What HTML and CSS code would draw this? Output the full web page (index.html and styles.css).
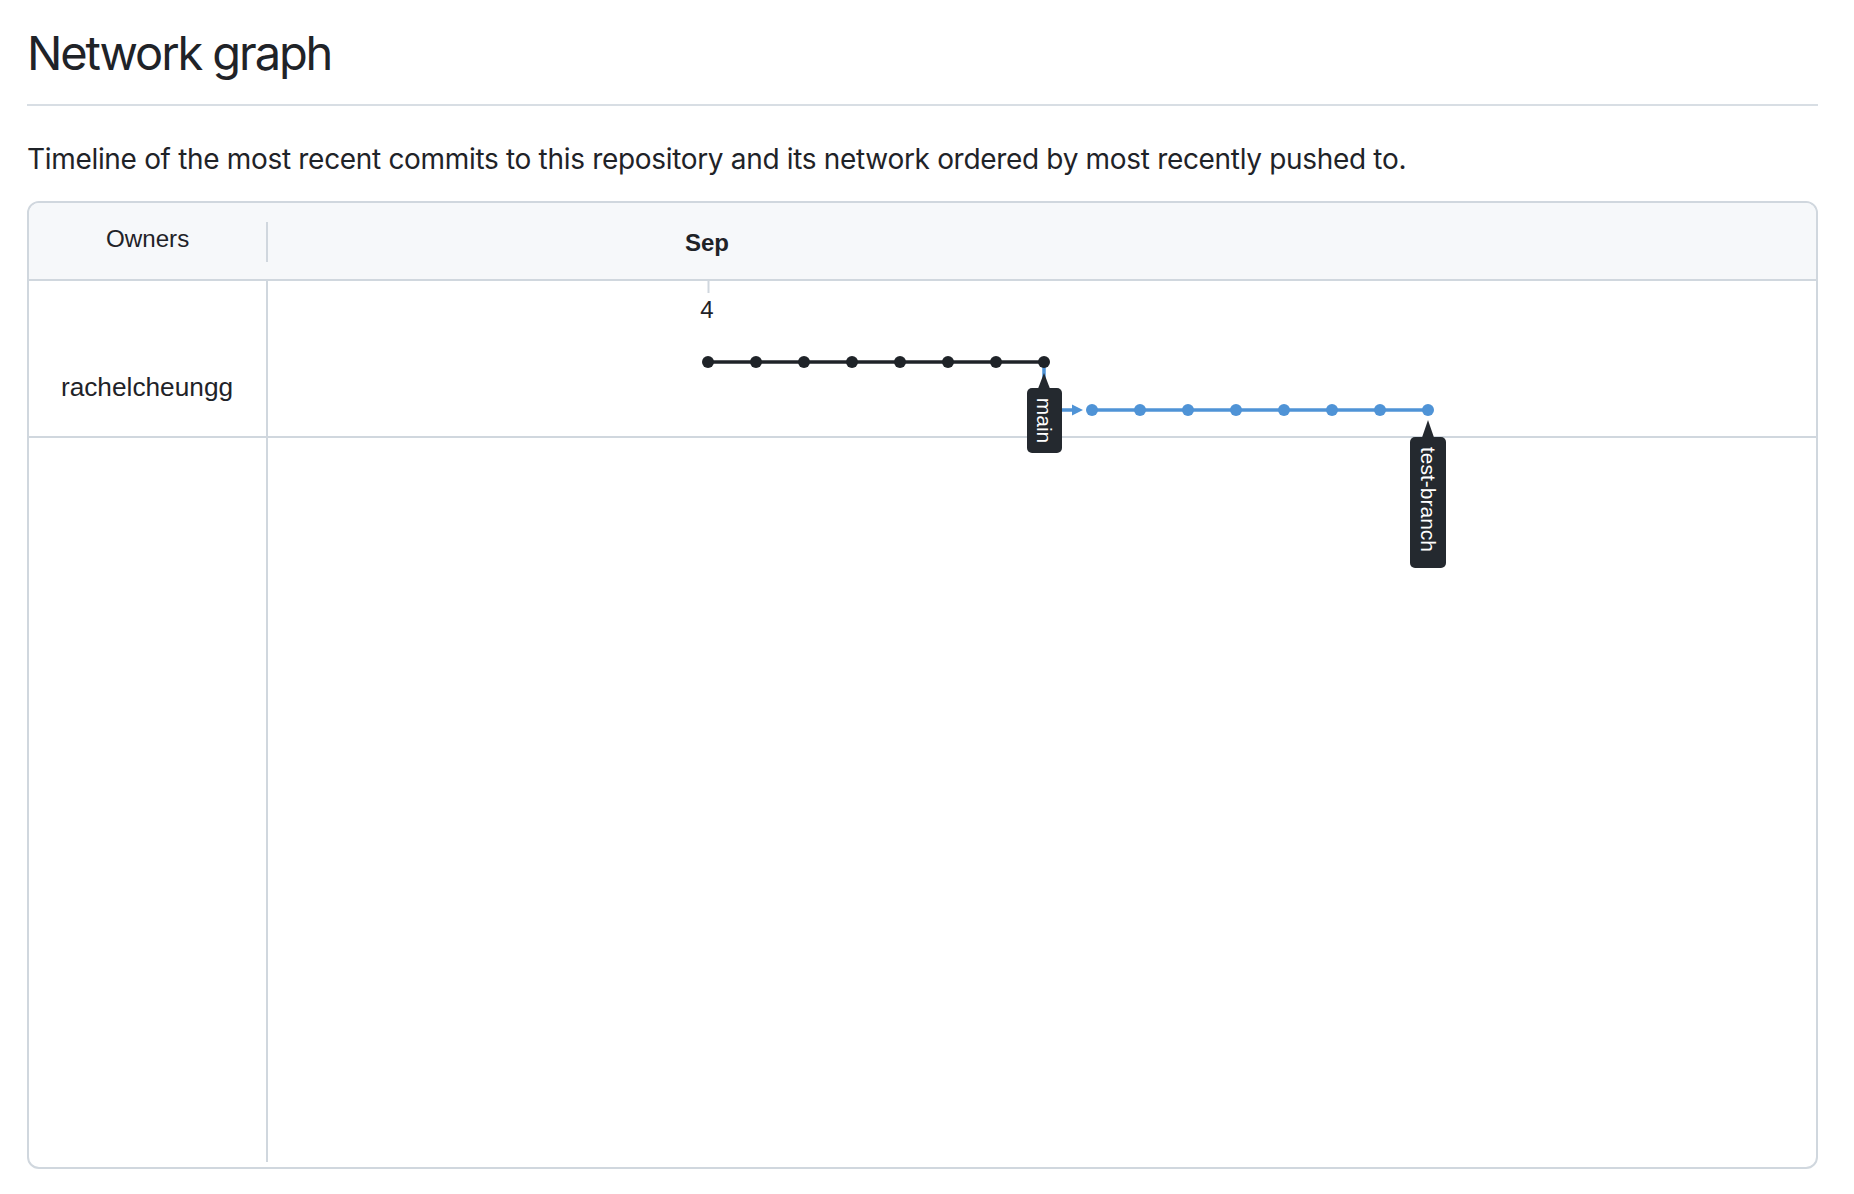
FILE: index.html
```html
<!DOCTYPE html>
<html lang="en">
<head>
<meta charset="utf-8">
<title>Network graph</title>
<link rel="stylesheet" href="styles.css">
</head>
<body>
<div class="page">
  <div class="subhead">
    <h2 class="subhead-heading">Network graph</h2>
  </div>
  <p class="description">Timeline of the most recent commits to this repository and its network ordered by most recently pushed to.</p>

  <div class="network">
    <div class="net-head">
      <div class="owners-h"><span class="canvas-text stretch">Owners</span></div>
      <div class="head-divider"></div>
      <div class="month-h"><span class="month">Sep</span></div>
    </div>
    <div class="net-row">
      <div class="user-cell"><span class="canvas-text stretch user-name">rachelcheungg</span></div>
      <div class="graph-cell"></div>
    </div>
    <div class="net-rest">
      <div class="user-cell"></div>
      <div class="graph-cell"></div>
    </div>

    <svg class="graph" viewBox="0 0 1791 968" width="1791" height="968" xmlns="http://www.w3.org/2000/svg">
      <line x1="681.5" y1="79" x2="681.5" y2="92" stroke="#d0d7de" stroke-width="2"/>
      <text x="680" y="117" class="day">4</text>

      <!-- branch line from main to test-branch -->
      <path d="M1017 161 V209 H1047" fill="none" stroke="#4f93d6" stroke-width="3.5"/>
      <polygon points="1045,203.5 1056,209 1045,214.5" fill="#4f93d6"/>
      <line x1="1065" y1="209" x2="1401" y2="209" stroke="#4f93d6" stroke-width="3.5"/>
      <g fill="#4f93d6">
        <circle cx="1065" cy="209" r="6"/>
        <circle cx="1113" cy="209" r="6"/>
        <circle cx="1161" cy="209" r="6"/>
        <circle cx="1209" cy="209" r="6"/>
        <circle cx="1257" cy="209" r="6"/>
        <circle cx="1305" cy="209" r="6"/>
        <circle cx="1353" cy="209" r="6"/>
        <circle cx="1401" cy="209" r="6"/>
      </g>

      <!-- main line -->
      <line x1="681" y1="161" x2="1017" y2="161" stroke="#1f2328" stroke-width="3.5"/>
      <g fill="#1f2328">
        <circle cx="681" cy="161" r="6"/>
        <circle cx="729" cy="161" r="6"/>
        <circle cx="777" cy="161" r="6"/>
        <circle cx="825" cy="161" r="6"/>
        <circle cx="873" cy="161" r="6"/>
        <circle cx="921" cy="161" r="6"/>
        <circle cx="969" cy="161" r="6"/>
        <circle cx="1017" cy="161" r="6"/>
      </g>

      <!-- main label -->
      <g class="ref-label">
        <polygon points="1017,172 1010.5,189 1023.5,189"/>
        <rect x="1000" y="187" width="35" height="65" rx="5"/>
        <text x="1017.5" y="219.5" transform="rotate(90 1017.5 219.5)">main</text>
      </g>

      <!-- test-branch label -->
      <g class="ref-label">
        <polygon points="1401,219 1394.5,238 1407.5,238"/>
        <rect x="1383" y="236" width="36" height="131" rx="5"/>
        <text x="1401" y="298.5" transform="rotate(90 1401 298.5)">test-branch</text>
      </g>
    </svg>
  </div>
</div>
</body>
</html>
```

FILE: styles.css
```css
* { box-sizing: border-box; }

html, body {
  margin: 0;
  padding: 0;
  background: #ffffff;
}

body {
  font-family: Inter, "Liberation Sans", Arial, sans-serif;
  color: #1f2328;
}

.page {
  width: 1791px;
  margin-left: 27px;
  padding-top: 23px;
}

.subhead {
  border-bottom: 2px solid #d8dee4;
  padding-bottom: 21px;
}

.subhead-heading {
  margin: 0;
  font-size: 47px;
  line-height: 60px;
  font-weight: 400;
  letter-spacing: -2.1px;
}

.description {
  margin: 32px 0 21px;
  font-size: 28px;
  line-height: 42px;
  letter-spacing: -0.32px;
}

.network {
  position: relative;
  height: 968px;
  border: 2px solid #d0d7de;
  border-radius: 12px;
  display: flex;
  flex-direction: column;
  overflow: hidden;
}

.canvas-text {
  font-family: "Liberation Sans", Arial, Helvetica, sans-serif;
  color: #1f2328;
}

.stretch {
  display: inline-block;
  transform: scaleX(1.05);
}

.net-head {
  height: 78px;
  flex: none;
  display: flex;
  align-items: center;
  background: #f6f8fa;
  border-bottom: 2px solid #d0d7de;
}

.owners-h {
  width: 237px;
  flex: none;
  text-align: center;
  font-size: 23px;
  line-height: 23px;
  padding-bottom: 4px;
}

.head-divider {
  width: 2px;
  height: 40px;
  background: #d0d7de;
  flex: none;
  margin-top: 2px;
}

.month-h {
  flex: 1;
  padding-left: 417px;
  padding-top: 4px;
}

.month {
  font-family: "Liberation Sans", Arial, Helvetica, sans-serif;
  font-weight: 700;
  font-size: 24px;
  line-height: 24px;
}

.net-row {
  height: 157px;
  flex: none;
  display: flex;
  border-bottom: 2px solid #d0d7de;
}

.net-rest {
  flex: 1;
  display: flex;
  padding-bottom: 5px;
}

.user-cell {
  width: 239px;
  flex: none;
  border-right: 2px solid #d0d7de;
  text-align: center;
}

.user-name {
  font-size: 25px;
  line-height: 25px;
  margin-top: 94px;
}

.graph-cell {
  flex: 1;
}

.graph {
  position: absolute;
  top: -2px;
  left: -2px;
  pointer-events: none;
}

.day {
  font-family: "Liberation Sans", Arial, sans-serif;
  font-size: 24px;
  fill: #1f2328;
  text-anchor: middle;
}

.ref-label polygon,
.ref-label rect {
  fill: #24292f;
}

.ref-label text {
  font-family: "Liberation Sans", Arial, Helvetica, sans-serif;
  font-size: 21px;
  fill: #ffffff;
  text-anchor: middle;
  dominant-baseline: central;
}
```
